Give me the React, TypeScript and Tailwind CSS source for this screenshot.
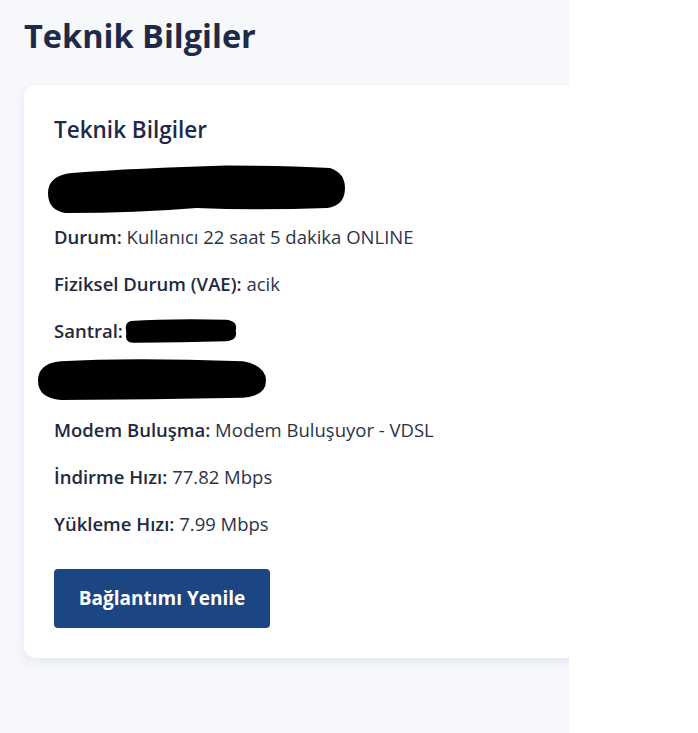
import React from "react";

function Redact({ className, d }: { className: string; d: string }) {
  return (
    <svg className={className} viewBox="0 0 100 20" preserveAspectRatio="none">
      <path d={d} fill="#000" />
    </svg>
  );
}

const rows = [
  { label: "Durum:", value: "Kullanıcı 22 saat 5 dakika ONLINE" },
  { label: "Fiziksel Durum (VAE):", value: "acik" },
];

const rows2 = [
  { label: "Modem Buluşma:", value: "Modem Buluşuyor - VDSL" },
  { label: "İndirme Hızı:", value: "77.82 Mbps" },
  { label: "Yükleme Hızı:", value: "7.99 Mbps" },
];

function Row({ label, value }: { label: string; value: string }) {
  return (
    <p className="h-[47px] leading-[28px] text-[18.5px] text-[#2b3447]">
      <span className="font-semibold text-[#1f2940]">{label}</span> {value}
    </p>
  );
}

export default function App() {
  return (
    <div className="flex min-h-screen bg-white font-['Open_Sans',sans-serif]">
      <section className="w-[569px] shrink-0 overflow-hidden bg-[#f7f8fc] pl-6 pt-[14px]">
        <h1 className="text-[32.5px] font-bold leading-[44px] text-[#1f2a48]">Teknik Bilgiler</h1>

        <div className="mt-[27px] w-[620px] rounded-xl bg-white pl-[30px] pt-[30px] pb-[30px] shadow-[0_4px_12px_rgba(30,50,110,0.08)]">
          <h2 className="text-[22.5px] font-semibold leading-[30px] text-[#1f2a48]">Teknik Bilgiler</h2>

          <div className="relative mt-[16px] h-[62px]">
            <Redact
              className="absolute -left-[6px] top-[2px] h-[50px] w-[297px]"
              d="M8 4 Q30 2 60 1 Q80 1 95 2 Q100 4 100 10 Q100 17 94 18 Q70 19 50 18 Q30 20 6 20 Q0 19 0 12 Q0 5 8 4 Z"
            />
          </div>

          {rows.map((r) => (
            <Row key={r.label} {...r} />
          ))}

          <div className="relative h-[47px]">
            <p className="leading-[28px] text-[18.5px] font-semibold text-[#1f2940]">Santral:</p>
            <Redact
              className="absolute left-[70px] top-0 h-[27px] w-[114px]"
              d="M6 3 Q40 1 90 2 Q100 3 98 10 Q100 17 90 18 Q50 19 10 19 Q0 20 2 12 Q0 4 6 3 Z"
            />
          </div>

          <div className="relative h-[52px]">
            <Redact
              className="absolute -left-[16px] -top-[7px] h-[43px] w-[228px]"
              d="M10 2 Q40 0 90 2 Q100 4 100 11 Q100 18 90 19 Q50 20 10 20 Q0 19 0 11 Q0 3 10 2 Z"
            />
          </div>

          {rows2.map((r) => (
            <Row key={r.label} {...r} />
          ))}

          <button className="mt-[12px] h-[59px] w-[216px] rounded-[4px] bg-[#1c4583] text-[19px] font-bold text-white">
            Bağlantımı Yenile
          </button>
        </div>
      </section>
      <div className="flex-1 bg-white" />
    </div>
  );
}
